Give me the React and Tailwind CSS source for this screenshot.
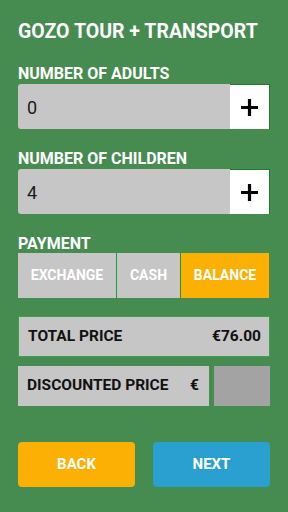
import React, { useState } from "react";

const Counter = ({ label, value, onAdd }) => (
  <div>
    <div className="text-[16px] font-bold leading-none text-white">{label}</div>
    <div className="mt-[2px] flex h-[45px]">
      <div className="flex flex-1 items-center rounded-l-[3px] bg-[#c6c6c6] pl-[9px] pt-[2px] text-[18px] text-[#1a1a1a]">
        {value}
      </div>
      <button
        onClick={onAdd}
        className="flex w-[40px] items-center justify-center border-t border-r border-[#1e7a2e] bg-white"
      >
        <svg width="17" height="17" viewBox="0 0 17 17">
          <path d="M8.5 0v17M0 8.5h17" stroke="#000" strokeWidth="3.2" />
        </svg>
      </button>
    </div>
  </div>
);

const App = () => {
  const [adults, setAdults] = useState(0);
  const [children, setChildren] = useState(4);
  const [payment, setPayment] = useState("BALANCE");

  const options = [
    { name: "EXCHANGE", w: "w-[98px]" },
    { name: "CASH", w: "w-[63px]" },
    { name: "BALANCE", w: "flex-1" },
  ];

  return (
    <div
      className="flex h-[512px] w-[288px] flex-col bg-[#468b50] px-[18px] pt-[22px]"
      style={{ fontFamily: "Roboto, 'Liberation Sans', sans-serif" }}
    >
      <div className="text-[19.5px] font-bold leading-[20px] text-white">
        GOZO TOUR + TRANSPORT
      </div>

      <div className="mt-[24px]">
        <Counter label="NUMBER OF ADULTS" value={adults} onAdd={() => setAdults(adults + 1)} />
      </div>
      <div className="mt-[22px]">
        <Counter label="NUMBER OF CHILDREN" value={children} onAdd={() => setChildren(children + 1)} />
      </div>

      <div className="mt-[22px] text-[16px] font-bold leading-none text-white">PAYMENT</div>
      <div className="mt-px flex h-[45px] w-[251px] gap-px bg-[#1a9a3a]">
        {options.map((o) => (
          <button
            key={o.name}
            onClick={() => setPayment(o.name)}
            className={`${o.w} flex items-center justify-center text-[14px] font-bold text-white ${
              payment === o.name ? "bg-[#fbb003]" : "bg-[#c6c6c6]"
            }`}
          >
            {o.name}
          </button>
        ))}
      </div>

      <div className="mt-[18px] flex h-[41px] items-center justify-between border border-[#3fa052] bg-[#c6c6c6] pl-[9px] pr-[8px] text-[15.5px] font-bold text-[#111]">
        <span>TOTAL PRICE</span>
        <span>€76.00</span>
      </div>

      <div className="mt-[9px] flex h-[40px] gap-[5px]">
        <div className="flex w-[191px] items-center justify-between bg-[#c6c6c6] pl-[9px] pr-[10px] text-[15.5px] font-bold text-[#111]">
          <span>DISCOUNTED PRICE</span>
          <span>€</span>
        </div>
        <div className="flex-1 bg-[#a3a3a3]" />
      </div>

      <div className="mt-[36px] flex justify-between">
        <button className="flex h-[45px] w-[117px] items-center justify-center rounded-[4px] bg-[#fbb003] text-[15px] font-bold text-white">
          BACK
        </button>
        <button className="flex h-[45px] w-[117px] items-center justify-center rounded-[4px] bg-[#2aa0d0] text-[15px] font-bold text-white">
          NEXT
        </button>
      </div>
    </div>
  );
};

export default App;
